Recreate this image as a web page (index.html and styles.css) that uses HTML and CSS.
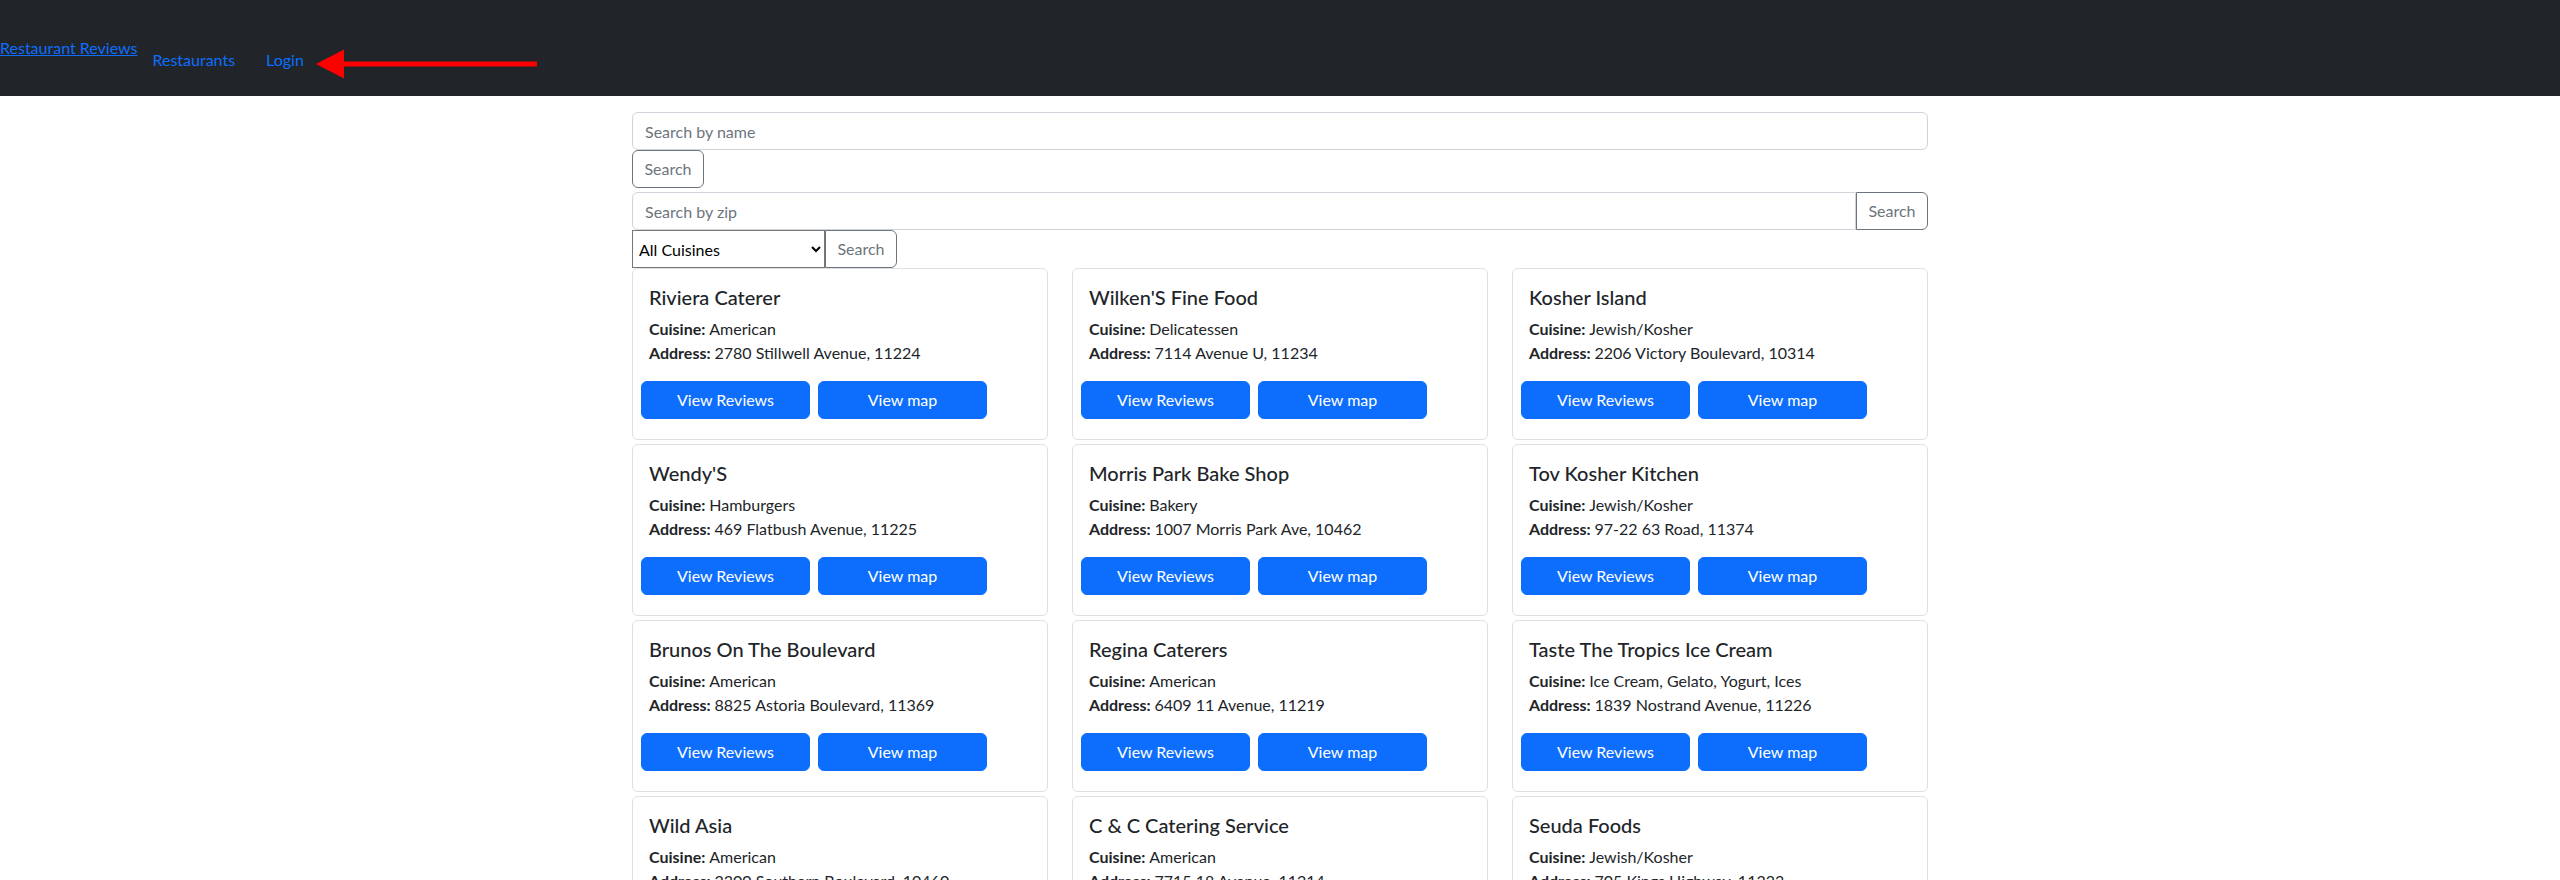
FILE: index.html
```html
<!DOCTYPE html>
<html lang="en">
<head>
<meta charset="utf-8">
<title>Restaurant Reviews</title>
<link rel="stylesheet" href="styles.css">
</head>
<body>
<nav class="navbar">
  <a class="brand" href="#">Restaurant Reviews</a>
  <div class="nav-links">
    <a class="nav-link" href="#">Restaurants</a>
    <a class="nav-link" href="#">Login</a>
  </div>
  <svg class="arrow" width="226" height="32" viewBox="0 0 226 32">
    <polygon points="2,16 30,1.5 30,30.5" fill="#ff0000"/>
    <rect x="29" y="13.5" width="194" height="5" fill="#ff0000"/>
  </svg>
</nav>
<main class="container">
  <div class="name-search">
    <input class="field" type="text" placeholder="Search by name">
    <button class="btn-outline" type="button">Search</button>
  </div>
  <div class="input-group">
    <input class="field" type="text" placeholder="Search by zip">
    <button class="btn-outline" type="button">Search</button>
  </div>
  <div class="cuisine-search">
    <select class="cuisine-select"><option>All Cuisines</option></select>
    <button class="btn-outline" type="button">Search</button>
  </div>
  <div class="cards">
    <div class="card"><h5 class="card-title">Riviera Caterer</h5><p class="card-text"><strong>Cuisine: </strong>American<br><strong>Address: </strong>2780 Stillwell Avenue, 11224</p><div class="card-actions"><a class="btn-primary" href="#">View Reviews</a><a class="btn-primary" href="#">View map</a></div></div>
    <div class="card"><h5 class="card-title">Wilken'S Fine Food</h5><p class="card-text"><strong>Cuisine: </strong>Delicatessen<br><strong>Address: </strong>7114 Avenue U, 11234</p><div class="card-actions"><a class="btn-primary" href="#">View Reviews</a><a class="btn-primary" href="#">View map</a></div></div>
    <div class="card"><h5 class="card-title">Kosher Island</h5><p class="card-text"><strong>Cuisine: </strong>Jewish/Kosher<br><strong>Address: </strong>2206 Victory Boulevard, 10314</p><div class="card-actions"><a class="btn-primary" href="#">View Reviews</a><a class="btn-primary" href="#">View map</a></div></div>
    <div class="card"><h5 class="card-title">Wendy'S</h5><p class="card-text"><strong>Cuisine: </strong>Hamburgers<br><strong>Address: </strong>469 Flatbush Avenue, 11225</p><div class="card-actions"><a class="btn-primary" href="#">View Reviews</a><a class="btn-primary" href="#">View map</a></div></div>
    <div class="card"><h5 class="card-title">Morris Park Bake Shop</h5><p class="card-text"><strong>Cuisine: </strong>Bakery<br><strong>Address: </strong>1007 Morris Park Ave, 10462</p><div class="card-actions"><a class="btn-primary" href="#">View Reviews</a><a class="btn-primary" href="#">View map</a></div></div>
    <div class="card"><h5 class="card-title">Tov Kosher Kitchen</h5><p class="card-text"><strong>Cuisine: </strong>Jewish/Kosher<br><strong>Address: </strong>97-22 63 Road, 11374</p><div class="card-actions"><a class="btn-primary" href="#">View Reviews</a><a class="btn-primary" href="#">View map</a></div></div>
    <div class="card"><h5 class="card-title">Brunos On The Boulevard</h5><p class="card-text"><strong>Cuisine: </strong>American<br><strong>Address: </strong>8825 Astoria Boulevard, 11369</p><div class="card-actions"><a class="btn-primary" href="#">View Reviews</a><a class="btn-primary" href="#">View map</a></div></div>
    <div class="card"><h5 class="card-title">Regina Caterers</h5><p class="card-text"><strong>Cuisine: </strong>American<br><strong>Address: </strong>6409 11 Avenue, 11219</p><div class="card-actions"><a class="btn-primary" href="#">View Reviews</a><a class="btn-primary" href="#">View map</a></div></div>
    <div class="card"><h5 class="card-title">Taste The Tropics Ice Cream</h5><p class="card-text"><strong>Cuisine: </strong>Ice Cream, Gelato, Yogurt, Ices<br><strong>Address: </strong>1839 Nostrand Avenue, 11226</p><div class="card-actions"><a class="btn-primary" href="#">View Reviews</a><a class="btn-primary" href="#">View map</a></div></div>
    <div class="card"><h5 class="card-title">Wild Asia</h5><p class="card-text"><strong>Cuisine: </strong>American<br><strong>Address: </strong>2300 Southern Boulevard, 10460</p><div class="card-actions"><a class="btn-primary" href="#">View Reviews</a><a class="btn-primary" href="#">View map</a></div></div>
    <div class="card"><h5 class="card-title">C &amp; C Catering Service</h5><p class="card-text"><strong>Cuisine: </strong>American<br><strong>Address: </strong>7715 18 Avenue, 11214</p><div class="card-actions"><a class="btn-primary" href="#">View Reviews</a><a class="btn-primary" href="#">View map</a></div></div>
    <div class="card"><h5 class="card-title">Seuda Foods</h5><p class="card-text"><strong>Cuisine: </strong>Jewish/Kosher<br><strong>Address: </strong>705 Kings Highway, 11223</p><div class="card-actions"><a class="btn-primary" href="#">View Reviews</a><a class="btn-primary" href="#">View map</a></div></div>
  </div>
</main>
</body>
</html>
```
FILE: styles.css
```css
* { box-sizing: border-box; }
html { overflow: hidden; }
body {
  margin: 0;
  font-family: Lato, "Segoe UI", sans-serif;
  font-size: 16px;
  line-height: 1.5;
  color: #212529;
  background: #fff;
}
.navbar {
  position: relative;
  height: 96px;
  background: #212529;
  display: flex;
  align-items: flex-start;
}
.brand {
  margin-top: 36px;
  line-height: 24px;
  color: #0d6efd;
  text-decoration: underline;
}
.nav-links {
  display: flex;
  gap: 31px;
  margin-top: 48px;
  margin-left: 15px;
}
.nav-link {
  color: #0d6efd;
  text-decoration: none;
  line-height: 24px;
}
.arrow {
  position: absolute;
  left: 314px;
  top: 48px;
}
.container {
  width: 1296px;
  margin: 16px auto 0;
}
.field {
  display: block;
  width: 100%;
  height: 38px;
  padding: 6px 12px;
  font: inherit;
  color: #212529;
  background: #fff;
  border: 1px solid #ced4da;
  border-radius: 6px;
}
.field::placeholder { color: #6c757d; }
.btn-outline {
  display: block;
  width: 72px;
  height: 38px;
  padding: 6px 0;
  font: inherit;
  color: #6c757d;
  background: #fff;
  border: 1px solid #6c757d;
  border-radius: 6px;
}
.name-search { margin-bottom: 4px; }
.input-group { display: flex; }
.input-group .field {
  flex: 1;
  border-top-right-radius: 0;
  border-bottom-right-radius: 0;
}
.input-group .btn-outline {
  border-top-left-radius: 0;
  border-bottom-left-radius: 0;
}
.cuisine-search { display: flex; }
.cuisine-select {
  width: 193px;
  height: 38px;
  padding: 0 2px;
  font: inherit;
  color: #000;
  background: #fff;
  border: 1px solid #767676;
  border-radius: 0;
}
.cuisine-search .btn-outline {
  border-top-left-radius: 0;
  border-bottom-left-radius: 0;
}
.cards {
  display: grid;
  grid-template-columns: repeat(3, 416px);
  column-gap: 24px;
  row-gap: 4px;
}
.card {
  border: 1px solid #dfdfdf;
  border-radius: 6px;
  padding: 16px;
}
.card-title {
  margin: 0 0 8px;
  font-size: 20px;
  font-weight: 500;
  line-height: 1.2;
}
.card-text { margin: 0 0 16px; }
.card-actions {
  display: flex;
  gap: 8px;
  margin-left: -8px;
}
.btn-primary {
  display: block;
  width: 169px;
  height: 38px;
  margin-bottom: 4px;
  padding: 6px 0;
  text-align: center;
  color: #fff;
  text-decoration: none;
  background: #0d6efd;
  border: 1px solid #0d6efd;
  border-radius: 6px;
}
```
